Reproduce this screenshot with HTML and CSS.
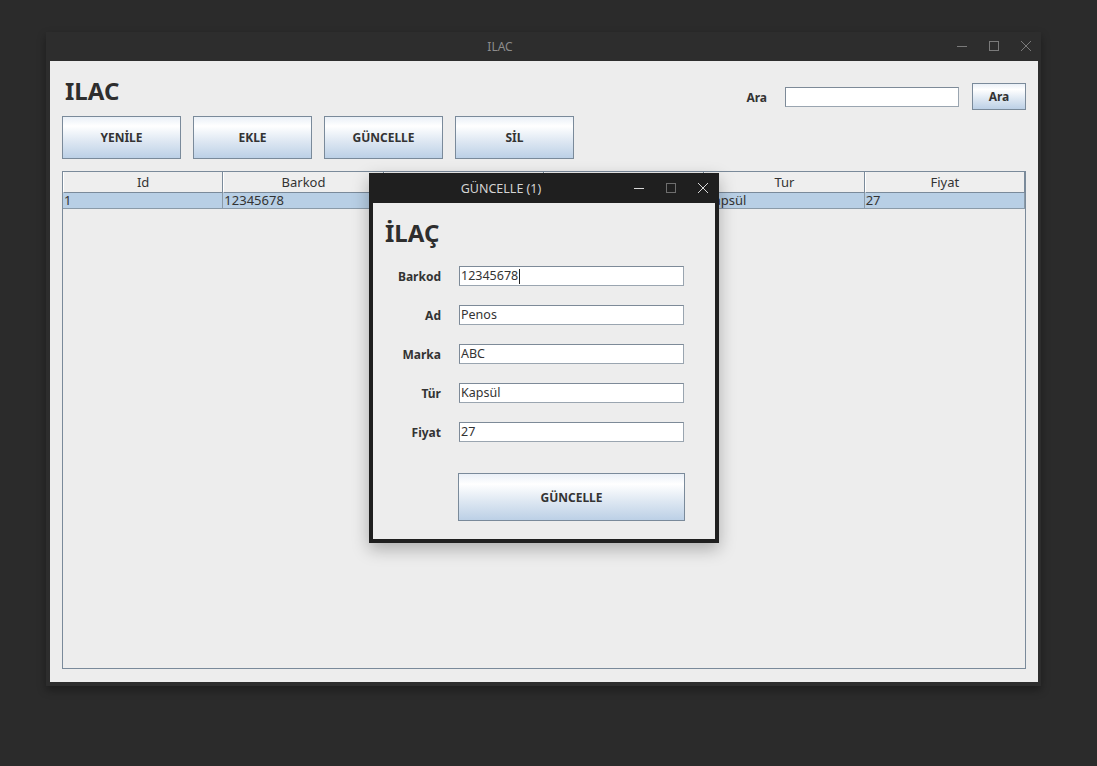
FILE: index.html
```html
<!DOCTYPE html>
<html lang="tr">
<head>
<meta charset="utf-8">
<title>ILAC</title>
<link rel="stylesheet" href="styles.css">
</head>
<body>
<div class="desktop">
  <div class="window main-window">
    <div class="titlebar">
      <span class="title">ILAC</span>
      <div class="controls">
        <svg class="ctl" width="12" height="12" viewBox="0 0 12 12"><line x1="1" y1="6.5" x2="11" y2="6.5" stroke="#7a7a7a" stroke-width="1"/></svg>
        <svg class="ctl" width="12" height="12" viewBox="0 0 12 12"><rect x="1.5" y="1.5" width="9" height="9" fill="none" stroke="#7a7a7a" stroke-width="1"/></svg>
        <svg class="ctl" width="12" height="12" viewBox="0 0 12 12"><path d="M1 1L11 11M11 1L1 11" stroke="#7a7a7a" stroke-width="1"/></svg>
      </div>
    </div>
    <div class="content">
      <div class="top-row">
        <h1 class="heading">ILAC</h1>
        <div class="search">
          <label class="search-label">Ara</label>
          <input class="field search-field" type="text">
          <button class="btn btn-small">Ara</button>
        </div>
      </div>
      <div class="actions">
        <button class="btn btn-action">YENİLE</button>
        <button class="btn btn-action">EKLE</button>
        <button class="btn btn-action">GÜNCELLE</button>
        <button class="btn btn-action">SİL</button>
      </div>
      <div class="table">
        <div class="thead">
          <div class="th">Id</div>
          <div class="th">Barkod</div>
          <div class="th">Ad</div>
          <div class="th">Marka</div>
          <div class="th">Tur</div>
          <div class="th">Fiyat</div>
        </div>
        <div class="tr selected">
          <div class="td">1</div>
          <div class="td">12345678</div>
          <div class="td">Penos</div>
          <div class="td">ABC</div>
          <div class="td">Kapsül</div>
          <div class="td">27</div>
        </div>
      </div>
    </div>
  </div>

  <div class="window dialog">
    <div class="titlebar dlg-titlebar">
      <span class="title dlg-title">GÜNCELLE (1)</span>
      <div class="controls dlg-controls">
        <svg class="ctl" width="12" height="12" viewBox="0 0 12 12"><line x1="1" y1="6.5" x2="11" y2="6.5" stroke="#d8d8d8" stroke-width="1"/></svg>
        <svg class="ctl" width="12" height="12" viewBox="0 0 12 12"><rect x="1.5" y="1.5" width="9" height="9" fill="none" stroke="#6e6e6e" stroke-width="1"/></svg>
        <svg class="ctl" width="12" height="12" viewBox="0 0 12 12"><path d="M1 1L11 11M11 1L1 11" stroke="#d8d8d8" stroke-width="1"/></svg>
      </div>
    </div>
    <div class="dlg-content">
      <h2 class="heading dlg-heading">İLAÇ</h2>
      <div class="form">
        <div class="form-row"><label class="form-label">Barkod</label><div class="field form-field">12345678<span class="caret"></span></div></div>
        <div class="form-row"><label class="form-label">Ad</label><div class="field form-field">Penos</div></div>
        <div class="form-row"><label class="form-label">Marka</label><div class="field form-field">ABC</div></div>
        <div class="form-row"><label class="form-label">Tür</label><div class="field form-field">Kapsül</div></div>
        <div class="form-row"><label class="form-label">Fiyat</label><div class="field form-field">27</div></div>
      </div>
      <div class="submit-row">
        <button class="btn btn-submit">GÜNCELLE</button>
      </div>
    </div>
  </div>
</div>
</body>
</html>
```

FILE: styles.css
```css
html, body {
  margin: 0;
  padding: 0;
  background: #2b2b2b;
  font-family: "Noto Sans", "Open Sans", sans-serif;
  color: #333333;
}

.desktop {
  position: relative;
  width: 1097px;
  height: 766px;
  overflow: hidden;
}

.window {
  position: absolute;
}

.main-window {
  left: 46px;
  top: 32px;
  width: 988px;
  padding: 0 3px 4px 4px;
  background: #2d2d2d;
  box-shadow: 0 4px 8px rgba(0, 0, 0, 0.35);
}

.titlebar {
  position: relative;
  height: 29px;
  display: flex;
  align-items: center;
  justify-content: center;
  padding-right: 88px;
}

.title {
  font-size: 12px;
  color: #8c8c8c;
}

.controls {
  position: absolute;
  right: 6px;
  top: 8px;
  display: flex;
  gap: 20px;
}

.ctl {
  display: block;
}

.content {
  background: #ededed;
  height: 621px;
  padding: 0 12px;
  box-sizing: border-box;
  display: flex;
  flex-direction: column;
}

.top-row {
  display: flex;
  justify-content: space-between;
  height: 55px;
}

.heading {
  margin: 13px 0 0 3px;
  font-size: 24px;
  line-height: 33px;
  font-weight: 700;
  color: #2e2e2e;
}

.search {
  display: flex;
  align-items: center;
  margin-top: 22px;
  height: 27px;
}

.search-label {
  font-size: 12px;
  font-weight: 700;
  margin-right: 18px;
  margin-top: 1px;
}

.field {
  box-sizing: border-box;
  border: 1px solid #7d8a98;
  border-right-color: #9aa5b0;
  border-bottom-color: #9aa5b0;
  background: #ffffff;
  outline: none;
  margin: 0;
}

.search-field {
  width: 174px;
  height: 20px;
  margin-top: 1px;
  margin-right: 13px;
}

.btn {
  box-sizing: border-box;
  border: 1px solid #7a8a9a;
  background: linear-gradient(to bottom, #eaf0f7 0%, #ffffff 22%, #dde7f2 60%, #bcd0e6 100%);
  font-family: "Noto Sans", "Open Sans", sans-serif;
  font-weight: 700;
  font-size: 12px;
  color: #333333;
  padding: 0;
  margin: 0;
}

.btn-small {
  width: 54px;
  height: 27px;
}

.actions {
  display: flex;
  gap: 12px;
}

.btn-action {
  width: 119px;
  height: 43px;
}

.table {
  margin-top: 12px;
  height: 498px;
  border: 1px solid #7a8a9a;
  background: #ededed;
  box-sizing: border-box;
}

.thead, .tr {
  display: grid;
  grid-template-columns: repeat(6, 1fr);
}

.th {
  height: 21px;
  line-height: 20px;
  text-align: center;
  font-size: 13px;
  color: #333333;
  background: #eeeeee;
  border-right: 1px solid #7a8a9a;
  border-bottom: 1px solid #7a8a9a;
  border-left: 1px solid #ffffff;
  box-sizing: border-box;
}

.tr.selected {
  background: #b8cfe5;
  border-bottom: 1px solid #8a9aa8;
}

.td {
  height: 15px;
  line-height: 15px;
  font-size: 13px;
  color: #333333;
  padding-left: 1px;
  border-right: 1px solid #8a9aa8;
  box-sizing: border-box;
}

.dialog {
  left: 369px;
  top: 173px;
  width: 342px;
  background: #1f1f1f;
  padding: 0 4px 4px 4px;
  box-shadow: 0 6px 16px rgba(0, 0, 0, 0.28);
}

.dlg-titlebar {
  height: 30px;
  padding-right: 86px;
}

.dlg-title {
  color: #d4d4d4;
  font-size: 12.5px;
}

.dlg-controls {
  right: 6px;
  top: 9px;
  gap: 20px;
}

.dlg-content {
  background: #ededed;
  height: 336px;
  box-sizing: border-box;
  padding: 13px 0 0 12px;
}

.dlg-heading {
  margin: 0;
}

.form {
  margin-top: 17px;
  display: flex;
  flex-direction: column;
  gap: 19px;
}

.form-row {
  display: flex;
  align-items: center;
  height: 20px;
}

.form-label {
  width: 56px;
  text-align: right;
  font-size: 12px;
  font-weight: 700;
  margin-right: 18px;
}

.form-field {
  width: 225px;
  height: 20px;
  font-size: 12.5px;
  line-height: 18px;
  padding-left: 1px;
  color: #333333;
  display: flex;
  align-items: center;
}

.caret {
  display: inline-block;
  width: 1px;
  height: 15px;
  background: #222222;
  margin-left: 1px;
}

.submit-row {
  margin-top: 31px;
  padding-left: 73px;
}

.btn-submit {
  width: 227px;
  height: 48px;
}
```
